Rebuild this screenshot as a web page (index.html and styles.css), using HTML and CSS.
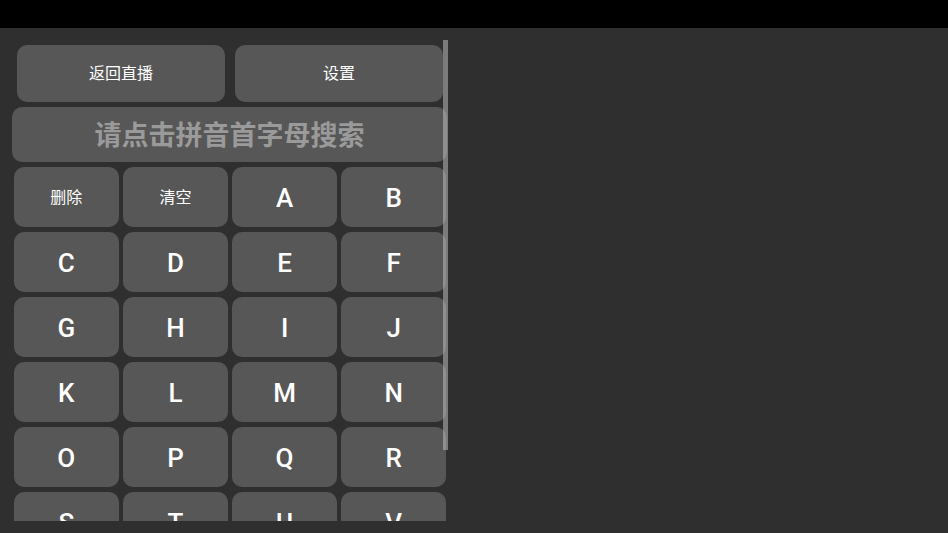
FILE: index.html
```html
<!DOCTYPE html>
<html lang="zh">
<head>
<meta charset="utf-8">
<link rel="stylesheet" href="styles.css">
</head>
<body>
<div class="statusbar"></div>
<div class="panel">
  <div class="top-row">
    <div class="btn top-btn">返回直播</div>
    <div class="btn top-btn">设置</div>
  </div>
  <div class="search">请点击拼音首字母搜索</div>
  <div class="keys">
    <div class="btn key cn">删除</div>
    <div class="btn key cn">清空</div>
    <div class="btn key">A</div>
    <div class="btn key">B</div>
    <div class="btn key">C</div>
    <div class="btn key">D</div>
    <div class="btn key">E</div>
    <div class="btn key">F</div>
    <div class="btn key">G</div>
    <div class="btn key">H</div>
    <div class="btn key">I</div>
    <div class="btn key">J</div>
    <div class="btn key">K</div>
    <div class="btn key">L</div>
    <div class="btn key">M</div>
    <div class="btn key">N</div>
    <div class="btn key">O</div>
    <div class="btn key">P</div>
    <div class="btn key">Q</div>
    <div class="btn key">R</div>
    <div class="btn key">S</div>
    <div class="btn key">T</div>
    <div class="btn key">U</div>
    <div class="btn key">V</div>
  </div>
  <div class="thumb"></div>
</div>
</body>
</html>
```
FILE: styles.css
```css
html, body {
  margin: 0;
  padding: 0;
}
body {
  width: 948px;
  height: 533px;
  background: #2f2f2f;
  overflow: hidden;
  font-family: Roboto, "Noto Sans CJK SC", sans-serif;
}
.statusbar {
  height: 28px;
  background: #000;
}
.panel {
  position: relative;
  margin: 12px 0 0 12px;
  width: 436px;
  height: 481px;
  overflow: hidden;
}
.btn {
  background: #575757;
  color: #fff;
  display: flex;
  align-items: center;
  justify-content: center;
  border-radius: 10px;
  box-sizing: border-box;
}
.top-row {
  display: flex;
  gap: 10px;
  padding: 5px 0 0 5px;
  width: 426px;
}
.top-btn {
  flex: 1;
  height: 57px;
  padding-bottom: 3px;
  font-family: "Noto Sans CJK SC", sans-serif;
  font-size: 16px;
}
.search {
  margin-top: 5px;
  width: 435px;
  height: 55px;
  padding-bottom: 2px;
  box-sizing: border-box;
  background: #575757;
  border-radius: 10px;
  color: #9a9a9a;
  font-family: "Noto Sans CJK SC", sans-serif;
  font-weight: 700;
  font-size: 27px;
  display: flex;
  align-items: center;
  justify-content: center;
}
.keys {
  margin: 5px 0 0 2px;
  width: 432px;
  display: grid;
  grid-template-columns: repeat(4, 1fr);
  column-gap: 4.5px;
  row-gap: 5px;
  grid-auto-rows: 60px;
}
.key {
  font-size: 26px;
  font-weight: 500;
  padding-top: 2px;
}
.key.cn {
  font-family: "Noto Sans CJK SC", sans-serif;
  font-size: 16px;
  font-weight: 400;
  padding-top: 0;
  padding-bottom: 2px;
}
.thumb {
  position: absolute;
  right: 0;
  top: 0;
  width: 5px;
  height: 410px;
  background: rgba(200, 200, 200, 0.5);
}
```
